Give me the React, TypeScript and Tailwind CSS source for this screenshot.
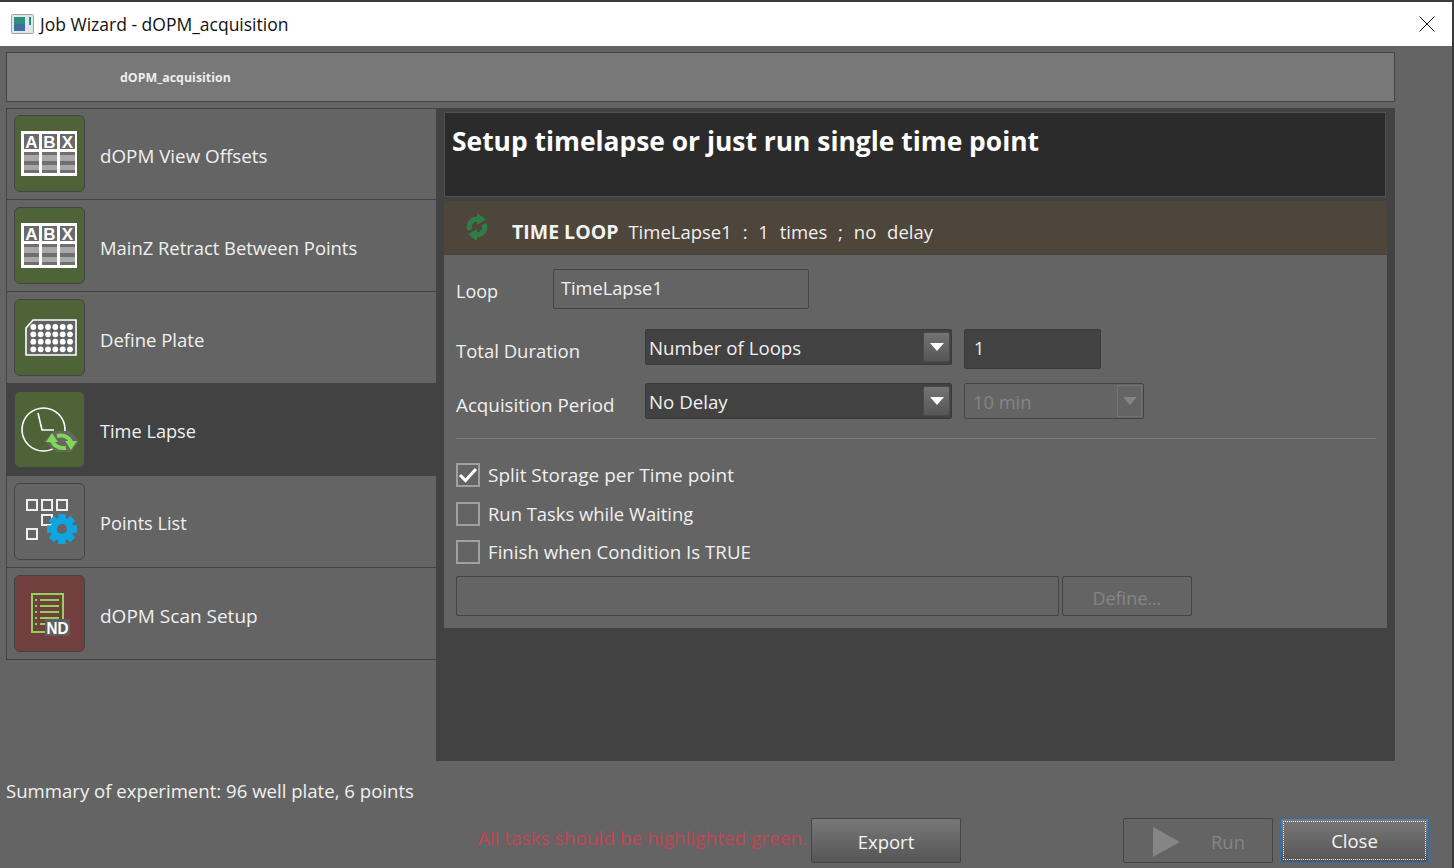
import React from 'react';

const tileBase = '-mt-[1px] w-[71px] h-[77px] shrink-0 rounded-[6px] border border-[#444444] overflow-hidden';

const TableIcon = () => (
  <svg width="69" height="75" viewBox="1 1 69 75">
    <rect x="7" y="16" width="56" height="45" fill="#ffffff" />
    {[10, 28, 46].map((x, i) => (
      <g key={x}>
        <rect x={x} y="19" width="15" height="15" fill="#6a6a6a" />
        <text x={x + 7.5} y="32.5" textAnchor="middle" fontSize="17" fontWeight="700" fill="#ffffff" fontFamily="Liberation Sans">
          {['A', 'B', 'X'][i]}
        </text>
        <rect x={x} y="37" width="15" height="21" fill="#a8a8a8" />
        <rect x={x} y="37" width="15" height="3" fill="#6f6f6f" />
        <rect x={x} y="46" width="15" height="4" fill="#6f6f6f" />
        <rect x={x} y="55" width="15" height="3" fill="#6f6f6f" />
      </g>
    ))}
  </svg>
);

const PlateIcon = () => (
  <svg width="69" height="75" viewBox="1 1 69 75">
    <path d="M12 29 L19 21 H62 V56 H12 Z" fill="#626262" stroke="#ffffff" strokeWidth="1.6" />
    {[28, 35.3, 42.7, 50.3].map((y) =>
      [19.3, 26.7, 34, 41.3, 48.7, 56].map((x) => <circle key={`${x}-${y}`} cx={x} cy={y} r="2.9" fill="#ffffff" />),
    )}
  </svg>
);

const ClockIcon = () => (
  <svg width="69" height="75" viewBox="1 1 69 75">
    <circle cx="29.5" cy="38.5" r="21.5" fill="none" stroke="#ffffff" strokeWidth="1.6" />
    <path d="M24 22 L28 39 L40 39" fill="none" stroke="#ffffff" strokeWidth="1.6" />
    <path d="M30 50 L40 40 H56 L65 50 L57 61 H42 Z" fill="#66685e" />
    <path d="M38 50 Q42 58 52 57" fill="none" stroke="#7fd858" strokeWidth="4" />
    <path d="M32 51 L38 42 L44 51 Z" fill="#7fd858" />
    <path d="M57 51 Q53 43 43 45" fill="none" stroke="#7fd858" strokeWidth="4" />
    <path d="M51 50 H63 L57 59 Z" fill="#7fd858" />
  </svg>
);

const PointsIcon = () => (
  <svg width="69" height="75" viewBox="1 1 69 75">
    {[[13, 17], [28, 17], [43, 17], [28, 32], [13, 46]].map(([x, y]) => (
      <rect key={`${x}-${y}`} x={x} y={y} width="10" height="10" fill="none" stroke="#eeeeee" strokeWidth="2" />
    ))}
    <g transform="translate(48 46)">
      {[0, 45, 90, 135, 180, 225, 270, 315].map((a) => (
        <rect key={a} x="-3.5" y="-15" width="7" height="30" fill="#0ea5e0" transform={`rotate(${a})`} />
      ))}
      <circle r="11.5" fill="#0ea5e0" />
      <circle r="5" fill="#646464" />
    </g>
  </svg>
);

const ScanIcon = () => (
  <svg width="69" height="75" viewBox="1 1 69 75">
    <rect x="18" y="19" width="31" height="38" fill="none" stroke="#8fd35a" strokeWidth="2" />
    {[25, 31, 37, 43, 49].map((y) => (
      <g key={y}>
        <rect x="21" y={y - 1} width="2" height="2" fill="#8fd35a" />
        <rect x="26" y={y - 1} width="19" height="2" fill="#8fd35a" />
      </g>
    ))}
    <rect x="31" y="44" width="25" height="17" fill="#5e5e5e" />
    <text x="43.5" y="59" textAnchor="middle" fontSize="17" fontWeight="700" fill="#ffffff" fontFamily="Liberation Sans" textLength="22" lengthAdjust="spacingAndGlyphs">
      ND
    </text>
  </svg>
);

const wizardSteps = [
  { label: 'dOPM View Offsets', tile: 'bg-[#4f6339]', icon: <TableIcon />, size: 'text-[18.8px]' },
  { label: 'MainZ Retract Between Points', tile: 'bg-[#4f6339]', icon: <TableIcon />, size: 'text-[18.4px]' },
  { label: 'Define Plate', tile: 'bg-[#4f6339]', icon: <PlateIcon />, size: 'text-[18.5px]' },
  { label: 'Time Lapse', tile: 'bg-[#4f6339]', icon: <ClockIcon />, active: true, size: 'text-[18.2px]' },
  { label: 'Points List', tile: 'bg-[#646464]', icon: <PointsIcon />, size: 'text-[18.2px]' },
  { label: 'dOPM Scan Setup', tile: 'bg-[#723f3f]', icon: <ScanIcon />, size: 'text-[19px]' },
];

const ComboArrow = () => (
  <span className="w-[27px] h-[30px] mr-[1px] shrink-0 flex items-center justify-center rounded-[2px] bg-linear-to-b from-[#747474] to-[#565656] border border-[#4a4a4a]">
    <span className="w-0 h-0 border-l-[7px] border-r-[7px] border-t-[8px] border-l-transparent border-r-transparent border-t-white" />
  </span>
);

const Combo = ({ text }: { text: string }) => (
  <div className="w-[307px] h-[36px] flex items-center bg-[#424242] border border-[#3a3a3a] rounded-[2px] pl-[3px]">
    <span className="flex-1 pt-[2px] text-[18.7px] text-[#f0f0f0]">{text}</span>
    <ComboArrow />
  </div>
);

const Check = ({ label, size, checked }: { label: string; size: string; checked?: boolean }) => (
  <div className="h-[38.5px] flex items-center gap-[8px]">
    <span className="w-[24px] h-[24px] border-2 border-[#a0a0a0] flex items-center justify-center">
      {checked && (
        <svg width="20" height="20" viewBox="0 0 20 20">
          <path d="M2 10 L7.5 15.5 L18 4" fill="none" stroke="#ffffff" strokeWidth="3" />
        </svg>
      )}
    </span>
    <span className={`${size} text-[#f0f0f0]`}>{label}</span>
  </div>
);

const LoopIcon = () => (
  <svg width="24" height="32" viewBox="0 0 24 32">
    <path d="M5 19 a7.5 7.5 0 0 1 8.5 -10.5" fill="none" stroke="#2f7d46" strokeWidth="5" />
    <path d="M12 2 L21 8.5 L12 14 Z" fill="#2f7d46" />
    <path d="M19 13 a7.5 7.5 0 0 1 -8.5 10.5" fill="none" stroke="#2f7d46" strokeWidth="5" />
    <path d="M12 30 L3 23.5 L12 18 Z" fill="#2f7d46" />
  </svg>
);

const App = () => {
  return (
    <div className="w-[1454px] h-[868px] overflow-hidden flex font-['Open_Sans',sans-serif] bg-[#646464]">
      <div className="w-[1452px] flex flex-col">
        <div className="h-[2px] bg-[#3a3a3a]" />
        <div className="h-[44px] bg-white flex items-center pl-[11px] pr-[17px] text-[17.5px] text-[#111111]">
          <svg width="23" height="20" viewBox="0 0 23 20" className="mr-[6px]">
            <rect x="0.5" y="0.5" width="22" height="19" rx="1" fill="#dfe6ec" stroke="#9aa5ad" />
            <rect x="3" y="3" width="11" height="14" fill="#2f8f7d" />
            <rect x="3" y="10" width="11" height="7" fill="#3c6f9c" />
            <rect x="18" y="3" width="2" height="8" fill="#2f8f7d" />
          </svg>
          <span>Job Wizard - dOPM_acquisition</span>
          <svg width="16" height="16" viewBox="0 0 16 16" className="ml-auto">
            <path d="M0.5 0.5 L15.5 15.5 M15.5 0.5 L0.5 15.5" stroke="#111111" strokeWidth="1" />
          </svg>
        </div>

        <div className="flex-1 pl-[6px] pt-[6px] flex flex-col">
          <div className="w-[1389px] h-[50px] shrink-0 bg-[#787878] border border-[#444444] flex items-center pl-[113px] pt-[2px] text-[12.4px] font-bold text-[#eeeeee]">
            dOPM_acquisition
          </div>

          <div className="mt-[6px] flex h-[653px] shrink-0">
            <div className="w-[430px] h-[552px] border-l border-t border-[#444444]">
              {wizardSteps.map((step, i) => (
                <div
                  key={step.label}
                  className={`${i === 0 ? 'h-[91px]' : 'h-[92px]'} border-b border-[#444444] flex items-center gap-[15px] pl-[7px] ${step.active ? 'bg-[#424242]' : ''}`}
                >
                  <div className={`${tileBase} ${step.tile}`}>{step.icon}</div>
                  <span className={`pt-[5px] ${step.size} text-[#f0f0f0]`}>{step.label}</span>
                </div>
              ))}
            </div>

            <div className="w-[959px] bg-[#424242] border-t border-[#444444] pl-[8px] pt-[3px]">
              <div className="w-[942px] h-[85px] bg-[#2b2b2b] border border-[#505050] px-[7px] pt-[9px] text-[26.4px] leading-[38px] font-bold text-white">
                Setup timelapse or just run single time point
              </div>
              <div className="w-[943px] h-[427px] mt-[4px] bg-[#646464]">
                <div className="h-[54px] bg-[#4e453b] border-b border-[#444444] flex items-center pl-[21px] pt-[9px]">
                  <span className="-mt-[10px]">
                    <LoopIcon />
                  </span>
                  <span className="ml-[23px] text-[19.5px] font-bold text-[#f2f2f2]">TIME LOOP</span>
                  <span className="ml-[10px] text-[18.5px] text-[#f0f0f0] whitespace-pre [word-spacing:0.6px]">TimeLapse1  :  1  times  ;  no  delay</span>
                </div>

                <div className="px-[12px]">
                  <div className="h-[40px] mt-[14px] flex items-center">
                    <span className="w-[97px] pt-[5px] text-[18px] text-[#f0f0f0]">Loop</span>
                    <div className="w-[256px] h-[40px] border border-[#444444] rounded-[2px] pl-[7px] pb-[1px] flex items-center text-[18.2px] text-[#f0f0f0]">
                      TimeLapse1
                    </div>
                  </div>

                  <div className="h-[40px] mt-[20px] flex items-start">
                    <span className="w-[189px] pt-[8px] text-[18.5px] text-[#f0f0f0]">Total Duration</span>
                    <Combo text="Number of Loops" />
                    <div className="ml-[12px] w-[137px] h-[40px] bg-[#424242] border border-[#3a3a3a] rounded-[2px] pl-[9px] pb-[2px] flex items-center text-[18px] text-[#f0f0f0]">
                      1
                    </div>
                  </div>

                  <div className="h-[36px] mt-[14px] flex items-start">
                    <span className="w-[189px] pt-[8px] text-[18.8px] text-[#f0f0f0]">Acquisition Period</span>
                    <Combo text="No Delay" />
                    <div className="ml-[12px] w-[180px] h-[36px] border border-[#444444] rounded-[2px] pl-[8px] flex items-center">
                      <span className="flex-1 pt-[2px] text-[18.3px] text-[#858585]">10 min</span>
                      <span className="w-[25px] h-[32px] mr-[1px] flex items-center justify-center border border-[#747474]">
                        <span className="w-0 h-0 border-l-[7px] border-r-[7px] border-t-[8px] border-l-transparent border-r-transparent border-t-[#858585]" />
                      </span>
                    </div>
                  </div>

                  <div className="mt-[19px] h-px w-[920px] bg-[#7c7c7c]" />

                  <div className="mt-[17px]">
                    <Check label="Split Storage per Time point" size="text-[19px]" checked />
                    <Check label="Run Tasks while Waiting" size="text-[18.4px]" />
                    <Check label="Finish when Condition Is TRUE" size="text-[18.7px]" />
                  </div>

                  <div className="mt-[4px] flex gap-[3px]">
                    <div className="w-[603px] h-[40px] border border-[#444444] rounded-[2px]" />
                    <div className="w-[130px] h-[40px] border border-[#444444] rounded-[2px] flex items-center justify-center pt-[6px] text-[18px] text-[#858585]">
                      Define...
                    </div>
                  </div>
                </div>
              </div>
            </div>
          </div>

          <div className="mt-[17px] h-[26px] flex items-center text-[18.6px] text-[#f0f0f0]">
            Summary of experiment: 96 well plate, 6 points
          </div>

          <div className="mt-[14px] h-[45px] flex items-center pr-[23px]">
            <span className="ml-auto mr-[4px] pb-[4px] text-[19px] text-[#c2444f]">All tasks should be highlighted green.</span>
            <button className="w-[150px] h-[45px] border border-[#444444] rounded-[2px] bg-linear-to-b from-[#787878] to-[#565656] pt-[2px] text-[18.5px] text-[#f4f4f4]" type="button">
              Export
            </button>
            <button className="ml-[162px] w-[150px] h-[45px] border border-[#444444] rounded-[2px] pt-[2px] text-[18.5px] text-[#858585] flex items-center justify-center gap-[31px] pl-[2px]" type="button">
              <span className="w-0 h-0 border-l-[27px] border-t-[15px] border-b-[15px] border-l-[#858585] border-t-transparent border-b-transparent" />
              Run
            </button>
            <button className="ml-[7px] w-[149px] h-[45px] border border-[#2f6fb0] rounded-[2px] bg-linear-to-b from-[#787878] to-[#565656] p-[2px] text-[18.5px] text-[#f4f4f4]" type="button">
              <span className="h-full w-full flex items-center justify-center border border-dotted border-white">Close</span>
            </button>
          </div>
        </div>
      </div>
      <div className="w-[2px] bg-[#3a3a3a]" />
    </div>
  );
};

export default App;
